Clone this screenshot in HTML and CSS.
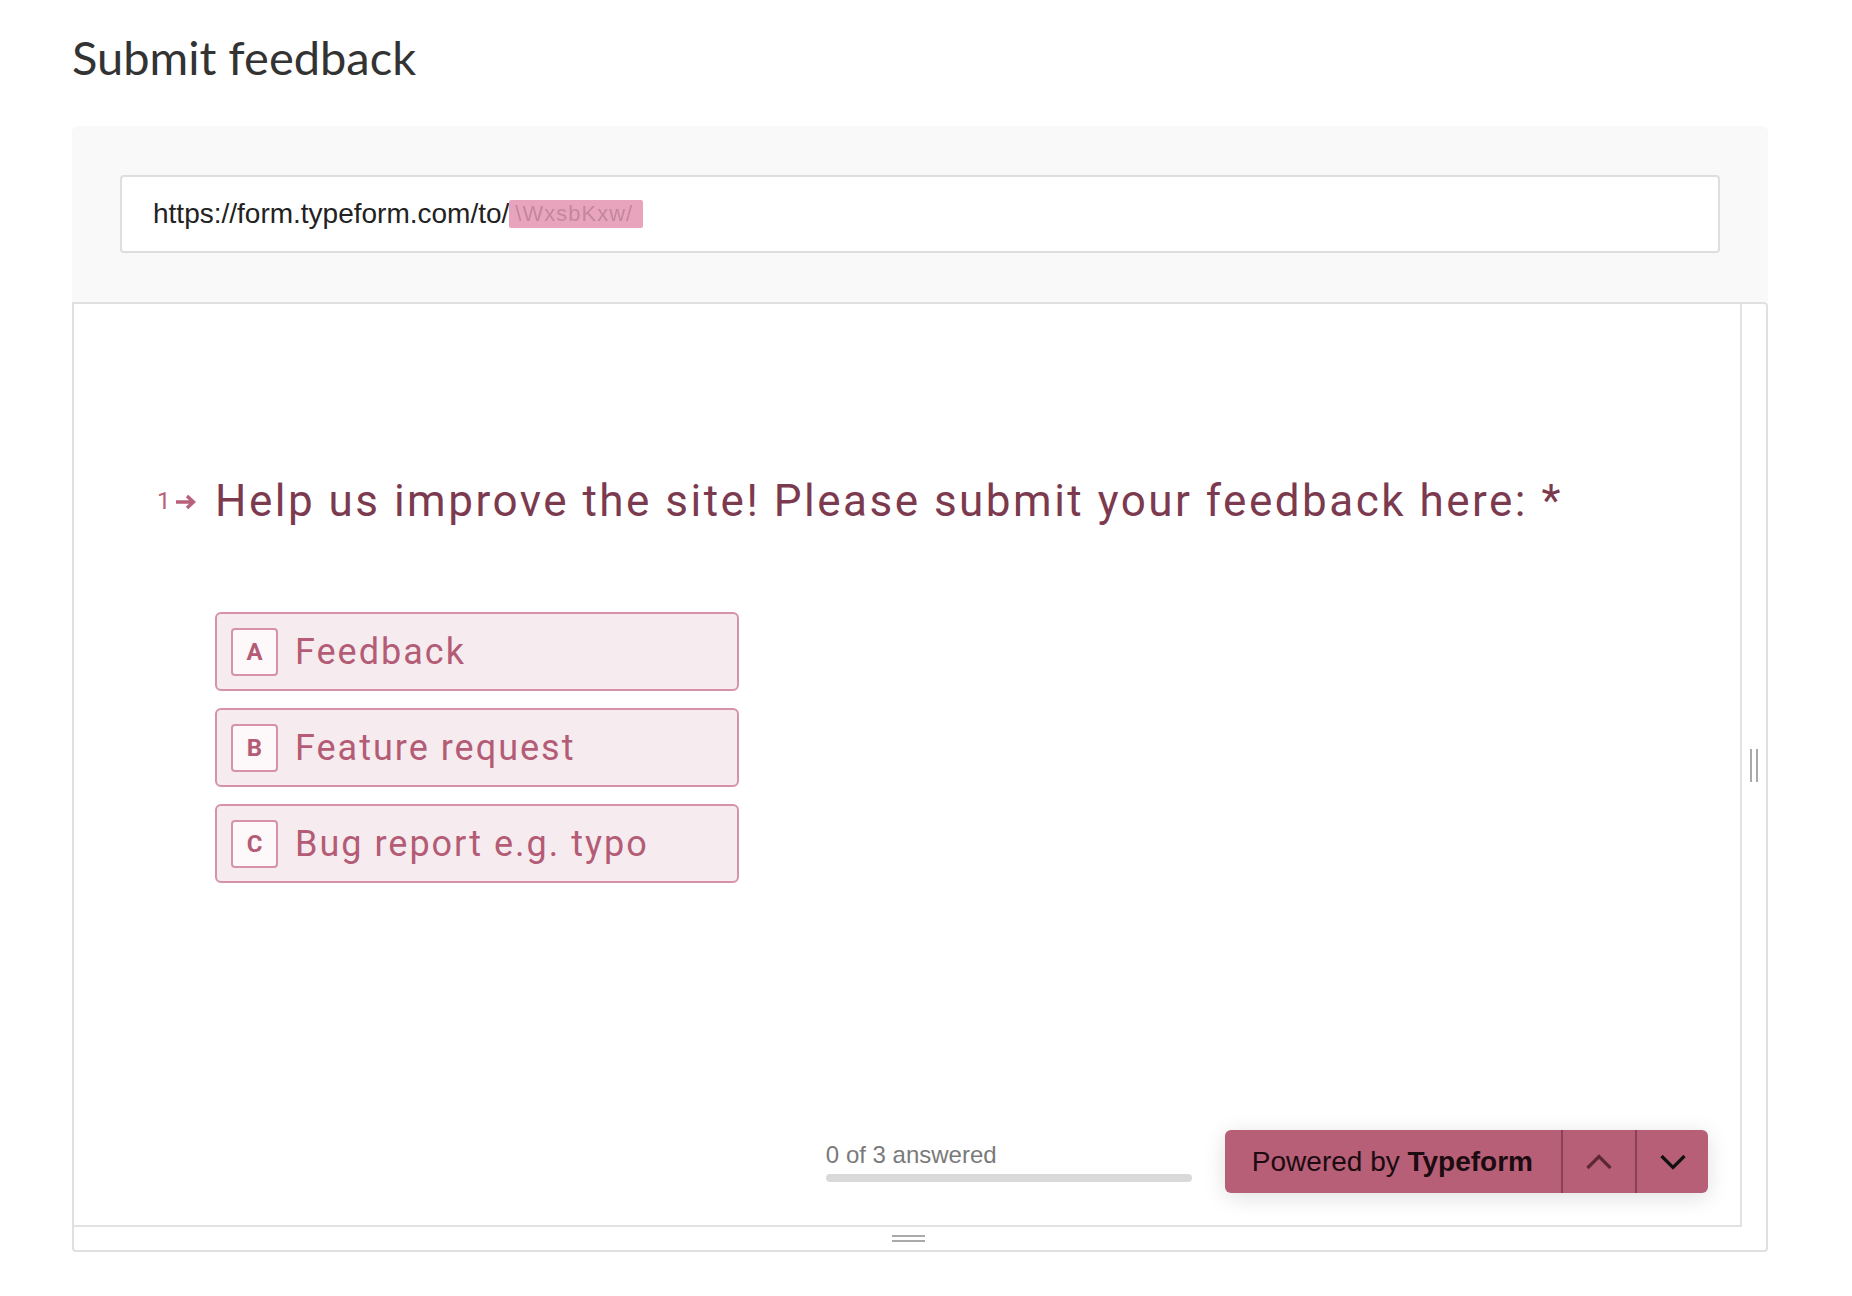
FILE: index.html
```html
<!DOCTYPE html>
<html lang="en">
<head>
<meta charset="utf-8">
<title>Submit feedback</title>
<link rel="stylesheet" href="styles.css">
</head>
<body>
<div class="page">
  <h1 class="title">Submit feedback</h1>
  <div class="embed">
    <div class="panel">
      <div class="url-input"><span class="url">https://form.typeform.com/to/</span><span class="redact">\WxsbKxw/</span></div>
    </div>
    <div class="frame-wrap">
      <div class="frame">
        <div class="form-body">
          <div class="question">
            <span class="q-num">1<svg class="q-arrow" width="22" height="16" viewBox="0 0 22 16"><path d="M1 8H18M12 2L18.5 8L12 14" fill="none" stroke="currentColor" stroke-width="3.4"/></svg></span>
            <span class="q-text">Help us improve the site! Please submit your feedback here: *</span>
          </div>
          <ul class="choices">
            <li class="choice"><span class="key">A</span><span class="label">Feedback</span></li>
            <li class="choice"><span class="key">B</span><span class="label">Feature request</span></li>
            <li class="choice"><span class="key">C</span><span class="label">Bug report e.g. typo</span></li>
          </ul>
        </div>
        <div class="footer">
          <div class="progress">
            <div class="progress-text">0 of 3 answered</div>
            <div class="progress-bar"></div>
          </div>
          <div class="powered">
            <span class="powered-text">Powered by <b>Typeform</b></span>
            <span class="nav nav-up"><svg width="28" height="16" viewBox="0 0 28 16"><polyline points="2.5,14 14,2.5 25.5,14" fill="none" stroke="currentColor" stroke-width="3.2"/></svg></span>
            <span class="nav nav-down"><svg width="28" height="16" viewBox="0 0 28 16"><polyline points="2.5,2 14,13.5 25.5,2" fill="none" stroke="currentColor" stroke-width="3.2"/></svg></span>
          </div>
        </div>
      </div>
      <div class="handle-v"><span></span><span></span></div>
      <div class="handle-h"><span></span><span></span></div>
      <div class="corner"></div>
    </div>
  </div>
</div>
</body>
</html>
```
FILE: styles.css
```css
html, body {
  margin: 0;
  padding: 0;
  background: #ffffff;
}

.page {
  padding: 28px 0 0 72px;
  width: 1696px;
}

.title {
  margin: 0;
  font-family: Lato, "Liberation Sans", sans-serif;
  font-weight: 400;
  font-size: 47px;
  line-height: 58px;
  color: #333333;
}

.embed {
  margin-top: 40px;
  width: 1696px;
}

.panel {
  background: #f9f9f9;
  padding: 49px 48px 49px 48px;
  border-radius: 6px 6px 0 0;
}

.url-input {
  box-sizing: border-box;
  height: 78px;
  background: #ffffff;
  border: 2px solid #dedede;
  border-radius: 4px;
  padding-left: 31px;
  display: flex;
  align-items: center;
  font-family: "Liberation Sans", Arial, sans-serif;
  font-size: 28px;
  color: #222222;
}

.redact {
  display: inline-block;
  box-sizing: border-box;
  width: 134px;
  padding-left: 6px;
  white-space: nowrap;
  background: #e7a4bc;
  color: rgba(110, 70, 85, 0.3);
  line-height: 28px;
  font-size: 22px;
  filter: blur(0.5px);
  letter-spacing: 1px;
  border-radius: 2px;
}

.frame-wrap {
  box-sizing: border-box;
  border: 2px solid #e0e0e0;
  border-radius: 0 4px 4px 4px;
  display: grid;
  grid-template-columns: 1668px 1fr;
  grid-template-rows: 923px 23px;
}

.frame {
  box-sizing: border-box;
  border-right: 2px solid #e2e2e2;
  border-bottom: 2px solid #e2e2e2;
  display: flex;
  flex-direction: column;
  background: #ffffff;
}

.form-body {
  flex: 1;
  padding: 169px 0 0 141px;
}

.question {
  display: flex;
  align-items: center;
  height: 56px;
}

.q-num {
  display: flex;
  align-items: center;
  width: 58px;
  margin-left: -58px;
  font-family: Roboto, "Liberation Sans", sans-serif;
  font-size: 24px;
  color: #b9607a;
}

.q-arrow {
  margin-left: 4px;
  margin-top: 1px;
}

.q-text {
  font-family: Roboto, "Liberation Sans", sans-serif;
  font-size: 44px;
  line-height: 56px;
  letter-spacing: 2.5px;
  color: #7c3a4f;
  white-space: nowrap;
}

.choices {
  list-style: none;
  margin: 83px 0 0 0;
  padding: 0;
  display: flex;
  flex-direction: column;
  gap: 17px;
}

.choice {
  box-sizing: border-box;
  width: 524px;
  height: 79px;
  border: 2px solid #d693a8;
  border-radius: 6px;
  background: #f6ecef;
  display: flex;
  align-items: center;
  padding-left: 14px;
}

.key {
  box-sizing: border-box;
  width: 47px;
  height: 48px;
  border: 2px solid #d693a8;
  border-radius: 4px;
  background: #fdf8fa;
  display: flex;
  align-items: center;
  justify-content: center;
  font-family: Roboto, "Liberation Sans", sans-serif;
  font-weight: 700;
  font-size: 24px;
  color: #b45c76;
}

.label {
  margin-left: 17px;
  font-family: Roboto, "Liberation Sans", sans-serif;
  font-size: 36px;
  letter-spacing: 2px;
  color: #b45c76;
}

.footer {
  display: flex;
  justify-content: flex-end;
  align-items: center;
  gap: 33px;
  padding: 0 32px 32px 0;
}

.progress {
  width: 366px;
}

.progress-text {
  font-family: "Liberation Sans", Arial, sans-serif;
  font-size: 24px;
  line-height: 28px;
  color: #7a7a7a;
}

.progress-bar {
  margin-top: 5px;
  height: 8px;
  border-radius: 4px;
  background: #d9d9d9;
}

.powered {
  display: flex;
  height: 63px;
  background: #b75f76;
  border-radius: 6px;
  box-shadow: 0 4px 22px rgba(0, 0, 0, 0.13);
  overflow: hidden;
}

.powered-text {
  padding: 0 28px 0 27px;
  font-family: "Liberation Sans", Arial, sans-serif;
  font-size: 28px;
  line-height: 63px;
  color: #1c0b11;
  white-space: nowrap;
}

.powered-text b {
  font-weight: 700;
}

.nav {
  box-sizing: border-box;
  width: 74px;
  border-left: 2px solid #8d3f55;
  display: flex;
  align-items: center;
  justify-content: center;
}

.nav-down {
  width: 73px;
}

.nav-up {
  color: #5c2737;
}

.nav-down {
  color: #111111;
}

.handle-v {
  display: flex;
  align-items: center;
  justify-content: center;
  gap: 4px;
}

.handle-v span {
  display: block;
  width: 2px;
  height: 33px;
  background: #a9a9a9;
}

.handle-h {
  display: flex;
  flex-direction: column;
  align-items: center;
  justify-content: center;
  gap: 3px;
}

.handle-h span {
  display: block;
  width: 33px;
  height: 2px;
  background: #a9a9a9;
}
```
